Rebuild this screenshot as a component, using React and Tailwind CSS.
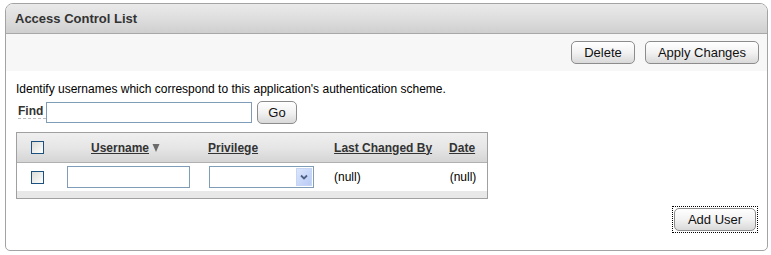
import React from "react";

function Btn({ children, className = "" }) {
  return (
    <button
      className={`h-[23px] rounded-[5px] border border-[#8c8c8c] bg-gradient-to-b from-[#ffffff] via-[#f2f2f2] to-[#d9d9d9] text-[13px] text-[#111] leading-none ${className}`}
      style={{ fontFamily: "'Liberation Sans', Arial, sans-serif" }}
    >
      {children}
    </button>
  );
}

function Check() {
  return (
    <span className="block w-[13px] h-[13px] border border-[#1c5180] bg-gradient-to-br from-[#dcdcd7] to-[#ffffff]" />
  );
}

export default function App() {
  return (
    <div className="w-[771px] h-[255px] bg-white pt-[3px] pl-[5px]" style={{ fontFamily: "'Liberation Sans', Arial, sans-serif" }}>
      <div className="w-[763px] h-[248px] border border-[#a3a3a3] rounded-t-[8px] rounded-b-[5px] overflow-hidden flex flex-col">
        <div className="h-[30px] shrink-0 border-b border-[#a8a8a8] bg-gradient-to-b from-[#eaeaea] via-[#dedede] to-[#cfcfcf] flex items-center pl-[9px]">
          <span className="text-[13px] font-bold text-[#333]">Access Control List</span>
        </div>
        <div className="h-[37px] shrink-0 bg-[#f7f7f7] flex items-center justify-end gap-[10px] pr-[8px] pb-[1px]">
          <Btn className="w-[64px]">Delete</Btn>
          <Btn className="w-[114px]">Apply Changes</Btn>
        </div>
        <div className="flex-1 flex flex-col pl-[10px] pt-[11px]">
          <div className="text-[12px] text-[#000] leading-[14px]">
            Identify usernames which correspond to this application's authentication scheme.
          </div>
          <div className="flex items-center mt-[5px] h-[22px]">
            <span className="text-[12px] font-bold text-[#333] ml-[2px] w-[28px] border-b border-dashed border-[#bbb] leading-[13px]">Find</span>
            <input className="w-[206px] h-[21px] border border-[#7f9db9] bg-white outline-none" />
            <Btn className="w-[40px] ml-[5px] rounded-[3px] border-[#1c5180] h-[22px]">Go</Btn>
          </div>
          <div className="mt-[9px] w-[472px] border border-[#a0a0a0] flex flex-col">
            <div className="h-[30px] border-b border-[#b0b0b0] bg-gradient-to-b from-[#efefef] via-[#e6e6e6] to-[#d5d5d5] flex items-center text-[12px] font-bold text-[#333]">
              <div className="w-[14px] ml-[14px]"><Check /></div>
              <div className="ml-[46px] flex items-center">
                <span className="underline">Username</span>
                <svg className="ml-[3px]" width="8" height="10" viewBox="0 0 8 10">
                  <path d="M0.5 1 H7.5 L4 9 Z" fill="#6b6b6b" />
                </svg>
              </div>
              <span className="ml-[48px] underline">Privilege</span>
              <span className="ml-[76px] underline">Last Changed By</span>
              <span className="ml-[17px] underline">Date</span>
            </div>
            <div className="h-[28px] flex items-center text-[12px] text-[#000]">
              <div className="w-[14px] ml-[14px]"><Check /></div>
              <input className="ml-[22px] w-[123px] h-[22px] border border-[#7f9db9] bg-white outline-none" />
              <div className="ml-[19px] w-[105px] h-[22px] border border-[#7f9db9] bg-white flex justify-end items-stretch p-[1px]">
                <div className="w-[16px] bg-gradient-to-br from-[#dce6fb] to-[#b9cbf6] border border-[#c6d4f5] flex items-center justify-center">
                  <svg width="8" height="6" viewBox="0 0 8 6"><path d="M1 1.5 L4 4.5 L7 1.5" fill="none" stroke="#4d6185" strokeWidth="1.8" /></svg>
                </div>
              </div>
              <span className="ml-[20px]">(null)</span>
              <span className="ml-[89px]">(null)</span>
            </div>
            <div className="h-[7px] bg-[#e8e8e8]" />
          </div>
          <div className="flex justify-end pr-[9px] mt-[7px]">
            <div className="border border-dotted border-black p-[1px]">
              <Btn className="w-[82px] block">Add User</Btn>
            </div>
          </div>
        </div>
      </div>
    </div>
  );
}
